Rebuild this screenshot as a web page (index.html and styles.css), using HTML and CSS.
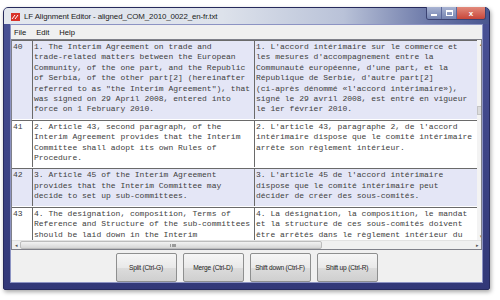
FILE: index.html
```html
<html>
<head>
    <link rel="stylesheet" href="styles.css">
</head>
<body>
    <div class="window">
        <div class="titlebar">
            <svg class="titlebar__icon" width="9" height="8" viewBox="0 0 9 8">
                <rect x="0" y="0" width="9" height="8" fill="#d8332a"/>
                <path d="M1 6 L4 2 M4 6 L7 2" stroke="#fff" stroke-width="1"/>
            </svg>
            <span class="titlebar__text">LF Alignment Editor - aligned_COM_2010_0022_en-fr.txt</span>
            <div class="controls">
                <span class="controls__btn controls__btn--min"><i></i></span>
                <span class="controls__btn controls__btn--max"><i></i></span>
                <span class="controls__btn controls__btn--close">x</span>
            </div>
        </div>
        <div class="client">
            <div class="menu">
                <span>File</span>
                <span>Edit</span>
                <span>Help</span>
            </div>
            <div class="grid">
                <div class="grid__body">
                    <div class="rows">
                        <div class="row row--selected">
                            <div class="row__num">40</div>
<div class="row__cell">1. The Interim Agreement on trade and
trade-related matters between the European
Community, of the one part, and the Republic
of Serbia, of the other part[2] (hereinafter
referred to as "the Interim Agreement"), that
was signed on 29 April 2008, entered into
force on 1 February 2010.</div>
<div class="row__cell">1. L'accord intérimaire sur le commerce et
les mesures d'accompagnement entre la
Communauté européenne, d'une part, et la
République de Serbie, d'autre part[2]
(ci-après dénommé «l'accord intérimaire»),
signé le 29 avril 2008, est entré en vigueur
le 1er février 2010.</div>
                        </div>
                        <div class="row">
                            <div class="row__num">41</div>
<div class="row__cell">2. Article 43, second paragraph, of the
Interim Agreement provides that the Interim
Committee shall adopt its own Rules of
Procedure.</div>
<div class="row__cell">2. L'article 43, paragraphe 2, de l'accord
intérimaire dispose que le comité intérimaire
arrête son règlement intérieur.</div>
                        </div>
                        <div class="row row--selected">
                            <div class="row__num">42</div>
<div class="row__cell">3. Article 45 of the Interim Agreement
provides that the Interim Committee may
decide to set up sub-committees.</div>
<div class="row__cell">3. L'article 45 de l'accord intérimaire
dispose que le comité intérimaire peut
décider de créer des sous-comités.</div>
                        </div>
                        <div class="row">
                            <div class="row__num">43</div>
<div class="row__cell">4. The designation, composition, Terms of
Reference and Structure of the sub-committees
should be laid down in the Interim</div>
<div class="row__cell">4. La désignation, la composition, le mandat
et la structure de ces sous-comités doivent
être arrêtés dans le règlement intérieur du</div>
                        </div>
                    </div>
                    <div class="vscroll">
                        <span class="vscroll__arrow">&#9652;</span>
                        <span class="vscroll__thumb"></span>
                        <span class="vscroll__arrow">&#9662;</span>
                    </div>
                </div>
                <div class="hscroll">
                    <span class="hscroll__arrow">&#9666;</span>
                    <span class="hscroll__thumb"><i></i></span>
                    <span class="hscroll__track"></span>
                    <span class="hscroll__arrow">&#9656;</span>
                </div>
            </div>
            <div class="buttons">
                <button>Split (Ctrl-G)</button>
                <button>Merge (Ctrl-D)</button>
                <button>Shift down (Ctrl-F)</button>
                <button>Shift up (Ctrl-R)</button>
            </div>
        </div>
    </div>
</body>
</html>
```
FILE: styles.css
```css
body {
    margin: 0;
    background: #fff;
    font-family: "Liberation Sans", Arial, sans-serif;
}

.window {
    margin: 7px 0 0 3px;
    width: 487px;
    height: 283px;
    border: 1px solid #262a5c;
    border-radius: 5px 5px 2px 2px;
    background: linear-gradient(#4a5296, #323878);
    padding: 0 6px 6px;
    box-sizing: border-box;
    display: flex;
    flex-direction: column;
    box-shadow: 1px 2px 4px rgba(0,0,0,0.35);
}

.titlebar {
    height: 17px;
    margin: 0 -6px;
    padding: 0 6px;
    border-radius: 4px 4px 0 0;
    background: linear-gradient(to right, #e3e7ee 0%, #dde2eb 45%, #b9c2d8 70%, #6b78a8 88%, #4a5690 100%);
    display: flex;
    align-items: center;
    position: relative;
}

.titlebar__icon {
    margin: 1px 4px 0 1px;
}

.titlebar__text {
    font-size: 7.9px;
    letter-spacing: -0.1px;
    color: #222;
}

.controls {
    position: absolute;
    right: 3px;
    top: -1px;
    display: flex;
    border: 1px solid #3b4272;
    border-top: 0;
    border-radius: 0 0 3px 3px;
    overflow: hidden;
}

.controls__btn {
    height: 12px;
    display: flex;
    align-items: center;
    justify-content: center;
    color: #fff;
    font-size: 8px;
    font-weight: bold;
}

.controls__btn--min,
.controls__btn--max {
    width: 14px;
    background: linear-gradient(#a9b4d3, #7483b0);
    border-right: 1px solid #5b679a;
}

.controls__btn--min i {
    width: 6px;
    height: 2px;
    background: #fff;
    margin-top: 4px;
}

.controls__btn--max i {
    width: 5px;
    height: 3px;
    border: 1px solid #fff;
    border-top-width: 2px;
}

.controls__btn--close {
    width: 28px;
    background: linear-gradient(#e28a7c, #c8463a);
}

.client {
    flex: 1;
    background: #f0f0f0;
    border: 1px solid #8c93c3;
    display: flex;
    flex-direction: column;
}

.menu {
    height: 14px;
    display: flex;
    align-items: center;
    gap: 10px;
    padding-left: 3px;
    font-size: 7.6px;
    color: #111;
}

.grid {
    border: 1px solid #7f8089;
    background: #fff;
}

.grid__body {
    display: flex;
    height: 200px;
    overflow: hidden;
}

.rows {
    width: 465px;
}

.row {
    display: grid;
    grid-template-columns: 20px 222px 223px;
    border-top: 1px solid #6a6a6a;
    margin-bottom: 1px;
    font-family: "Liberation Mono", "Courier New", monospace;
    font-size: 8px;
    line-height: 10.4px;
    color: #404040;
}

.row--selected {
    background: #e4e6f6;
}

.row__num {
    padding: 1px 0 0 1px;
}

.row__cell {
    white-space: pre;
    padding: 1px 0 4px 1px;
    border-left: 1px solid #6a6a6a;
    overflow: hidden;
}

.vscroll {
    flex: 1;
    background: #f3f3f3;
    display: flex;
    flex-direction: column;
    align-items: center;
    font-size: 5px;
    color: #555;
}

.vscroll__arrow {
    height: 8px;
    line-height: 8px;
}

.vscroll__thumb {
    width: 6px;
    height: 7px;
    margin: 58px 0 auto;
    background: #dcdcdc;
    border: 1px solid #c4c4c4;
}

.hscroll {
    height: 8px;
    display: flex;
    align-items: center;
    background: #f0f0f0;
    border-top: 1px solid #e2e2e2;
    font-size: 5px;
    color: #555;
}

.hscroll__arrow {
    width: 8px;
    text-align: center;
}

.hscroll__thumb {
    width: 300px;
    height: 6px;
    border: 1px solid #bcbcbc;
    border-radius: 2px;
    background: linear-gradient(#f2f2f2, #d6d6d6);
    display: flex;
    justify-content: center;
    align-items: center;
}

.hscroll__thumb i {
    width: 1px;
    height: 3px;
    border-left: 1px solid #9a9a9a;
    border-right: 1px solid #9a9a9a;
    box-shadow: 3px 0 0 -0px #9a9a9a;
}

.hscroll__track {
    flex: 1;
}

.buttons {
    display: flex;
    justify-content: center;
    gap: 6px;
    padding-top: 3px;
}

button {
    width: 61px;
    height: 29px;
    padding: 0;
    font-family: "Liberation Sans", Arial, sans-serif;
    font-size: 6.6px;
    letter-spacing: -0.2px;
    color: #222;
    background: linear-gradient(#f6f6f6 0%, #e9e9e9 50%, #dcdcdc 51%, #cfcfcf 100%);
    border: 1px solid #8e8f8f;
    border-radius: 2px;
}
```
